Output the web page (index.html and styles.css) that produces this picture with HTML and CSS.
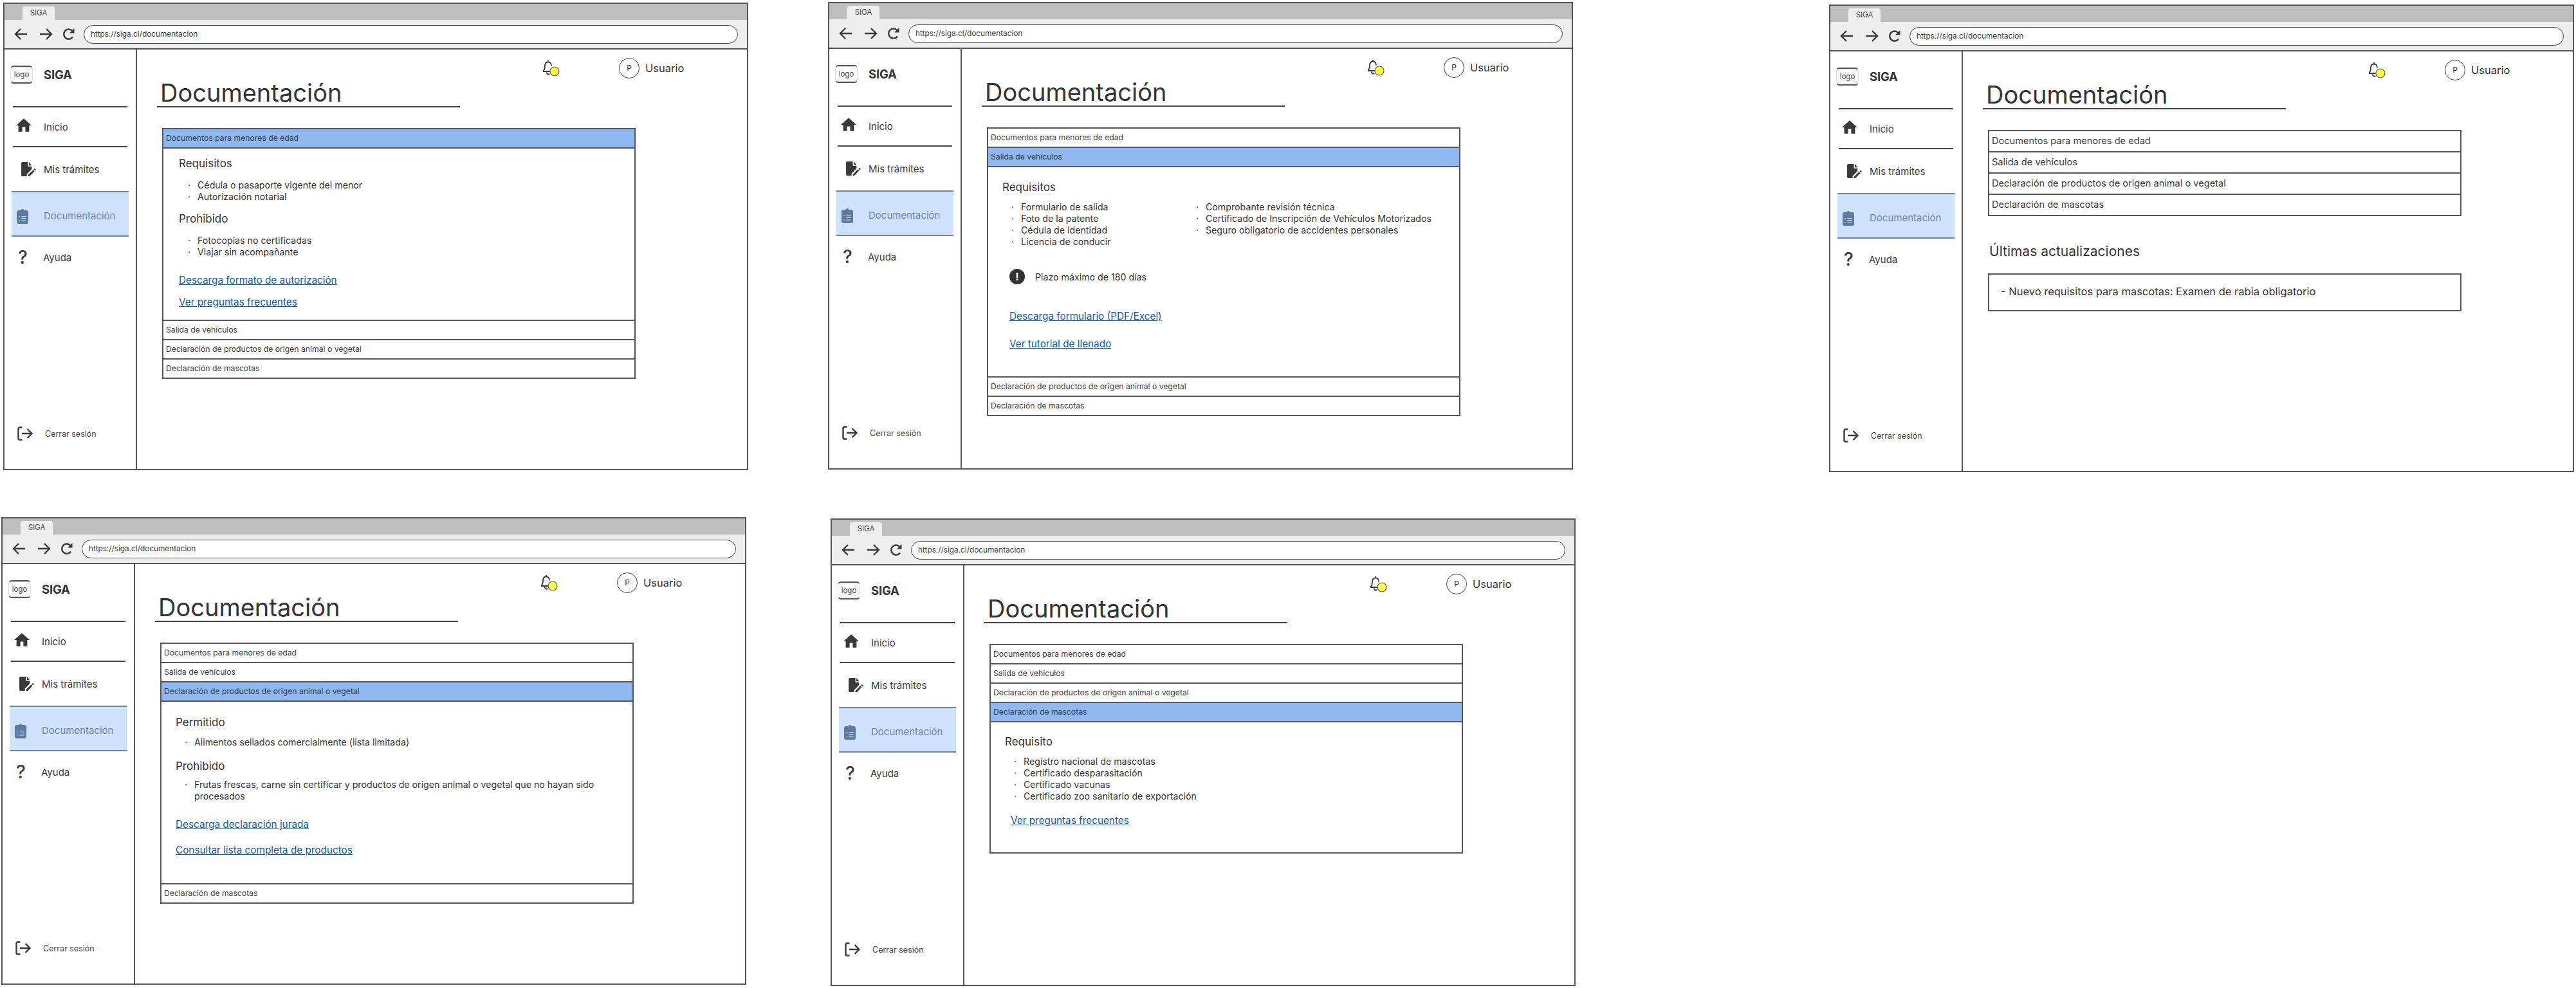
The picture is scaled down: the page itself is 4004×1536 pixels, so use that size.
FILE: index.html
```html
<!DOCTYPE html>
<html lang="es">
<head>
    <meta charset="UTF-8">
    <title>SIGA - Documentación</title>
    <link rel="stylesheet" href="styles.css">
</head>
<body>
    <!-- shared icons -->
    <svg class="icon-defs" aria-hidden="true">
        <symbol id="i-back" viewBox="0 0 22 20"><path d="M20 10H3M10 2l-8 8 8 8" fill="none" stroke="currentColor" stroke-width="2.4"/></symbol>
        <symbol id="i-forward" viewBox="0 0 22 20"><path d="M2 10h17M12 2l8 8-8 8" fill="none" stroke="currentColor" stroke-width="2.4"/></symbol>
        <symbol id="i-reload" viewBox="0 0 20 20"><path d="M16 14.5A7.6 7.6 0 1 1 15.4 5" fill="none" stroke="currentColor" stroke-width="2.4"/><path d="M18.5 1v7.5H11z" fill="currentColor"/></symbol>
        <symbol id="i-home" viewBox="2 3 20 17"><path d="M10 20v-6h4v6h5v-8h3L12 3 2 12h3v8z" fill="currentColor"/></symbol>
        <symbol id="i-doc" viewBox="0 0 25 23"><path d="M2 0h9v6a1 1 0 0 0 1 1h5v4.500l-8 8V23H2a2 2 0 0 1-2-2V2a2 2 0 0 1 2-2zM12.500 0 17 5.500h-4.500z" fill="currentColor"/><path d="M11 21v2h2.500l8-8-2.300-2.300zM20.200 11.800l2.300 2.300 1.500-1.500-2.300-2.300z" fill="currentColor"/></symbol>
        <symbol id="i-clip" viewBox="0 0 18 24"><path d="M3 3h3.500a2.600 2.600 0 0 1 5 0H15a3 3 0 0 1 3 3v15a3 3 0 0 1-3 3H3a3 3 0 0 1-3-3V6a3 3 0 0 1 3-3z" fill="currentColor"/><path d="M7.500 12.500h7M7.500 15.500h7M7.500 19h7M3.500 12.500h1.500M3.500 19h1.500" stroke="#cfe2fb" stroke-width="1.200"/></symbol>
        <symbol id="i-logout" viewBox="0 0 25 22"><path d="M7.500 1.500H3.500A2 2 0 0 0 1.500 3.500v15a2 2 0 0 0 2 2h4" fill="none" stroke="currentColor" stroke-width="2.400"/><path d="M7 11h15M15.500 4l7 7-7 7" fill="none" stroke="currentColor" stroke-width="2.400"/></symbol>
        <symbol id="i-bell" viewBox="0 0 27 26"><path d="M8 1v3M8 3.500c-3.500 0-5 3-5 6.500 0 4-1.200 6-3 8h16M5.500 19.500c.5 2 1.500 3 3 3h2" fill="none" stroke="currentColor" stroke-width="1.800"/><path d="M8 3.500c3.500 0 5 2.500 5 6" fill="none" stroke="currentColor" stroke-width="1.800"/><circle cx="18" cy="18" r="7" fill="#ffff4d" stroke="#555" stroke-width="1.200"/></symbol>
    </svg>

    <!-- 1: Documentos para menores de edad -->
    <section class="window window-1">
        <div class="tabs"><span class="tab">SIGA</span></div>
        <div class="toolbar">
            <svg class="tool-back"><use href="#i-back"/></svg>
            <svg class="tool-forward"><use href="#i-forward"/></svg>
            <svg class="tool-reload"><use href="#i-reload"/></svg>
            <div class="url">https://siga.cl/documentacion</div>
        </div>
        <div class="app">
            <aside class="sidebar">
                <div class="brand">
                    <div class="logo">logo</div>
                    <strong>SIGA</strong>
                </div>
                <a class="nav-item nav-home"><svg class="nav-icon"><use href="#i-home"/></svg>Inicio</a>
                <a class="nav-item nav-tramites"><svg class="nav-icon"><use href="#i-doc"/></svg>Mis trámites</a>
                <a class="nav-item nav-active"><svg class="nav-icon"><use href="#i-clip"/></svg>Documentación</a>
                <a class="nav-item nav-help"><span class="nav-q">?</span>Ayuda</a>
                <a class="nav-logout"><svg class="nav-icon"><use href="#i-logout"/></svg>Cerrar sesión</a>
            </aside>
            <main class="content">
                <div class="topbar">
                    <svg class="bell"><use href="#i-bell"/></svg>
                    <span class="avatar">P</span>
                    <span class="user">Usuario</span>
                </div>
                <h1>Documentación</h1>
                <div class="accordion">
                    <div class="acc-row acc-open">Documentos para menores de edad</div>
                    <div class="panel panel-menores">
                        <h3>Requisitos</h3>
                        <ul>
                            <li>Cédula o pasaporte vigente del menor</li>
                            <li>Autorización notarial</li>
                        </ul>
                        <h3>Prohibido</h3>
                        <ul>
                            <li>Fotocopias no certificadas</li>
                            <li>Viajar sin acompañante</li>
                        </ul>
                        <a class="doc-link">Descarga formato de autorización</a>
                        <a class="doc-link">Ver preguntas frecuentes</a>
                    </div>
                    <div class="acc-row">Salida de vehículos</div>
                    <div class="acc-row">Declaración de productos de origen animal o vegetal</div>
                    <div class="acc-row">Declaración de mascotas</div>
                </div>
            </main>
        </div>
    </section>

    <!-- 2: Salida de vehiculos -->
    <section class="window window-2">
        <div class="tabs"><span class="tab">SIGA</span></div>
        <div class="toolbar">
            <svg class="tool-back"><use href="#i-back"/></svg>
            <svg class="tool-forward"><use href="#i-forward"/></svg>
            <svg class="tool-reload"><use href="#i-reload"/></svg>
            <div class="url">https://siga.cl/documentacion</div>
        </div>
        <div class="app">
            <aside class="sidebar">
                <div class="brand">
                    <div class="logo">logo</div>
                    <strong>SIGA</strong>
                </div>
                <a class="nav-item nav-home"><svg class="nav-icon"><use href="#i-home"/></svg>Inicio</a>
                <a class="nav-item nav-tramites"><svg class="nav-icon"><use href="#i-doc"/></svg>Mis trámites</a>
                <a class="nav-item nav-active"><svg class="nav-icon"><use href="#i-clip"/></svg>Documentación</a>
                <a class="nav-item nav-help"><span class="nav-q">?</span>Ayuda</a>
                <a class="nav-logout"><svg class="nav-icon"><use href="#i-logout"/></svg>Cerrar sesión</a>
            </aside>
            <main class="content">
                <div class="topbar">
                    <svg class="bell"><use href="#i-bell"/></svg>
                    <span class="avatar">P</span>
                    <span class="user">Usuario</span>
                </div>
                <h1>Documentación</h1>
                <div class="accordion">
                    <div class="acc-row">Documentos para menores de edad</div>
                    <div class="acc-row acc-open">Salida de vehículos</div>
                    <div class="panel panel-vehiculos">
                        <h3>Requisitos</h3>
                        <div class="two-cols">
                            <ul>
                                <li>Formulario de salida</li>
                                <li>Foto de la patente</li>
                                <li>Cédula de identidad</li>
                                <li>Licencia de conducir</li>
                            </ul>
                            <ul>
                                <li>Comprobante revisión técnica</li>
                                <li>Certificado de Inscripción de Vehículos Motorizados</li>
                                <li>Seguro obligatorio de accidentes personales</li>
                            </ul>
                        </div>
                        <div class="notice"><span class="notice-icon">!</span>Plazo máximo de 180 días</div>
                        <a class="doc-link">Descarga formulario (PDF/Excel)</a>
                        <a class="doc-link">Ver tutorial de llenado</a>
                    </div>
                    <div class="acc-row">Declaración de productos de origen animal o vegetal</div>
                    <div class="acc-row">Declaración de mascotas</div>
                </div>
            </main>
        </div>
    </section>

    <!-- 3: todo cerrado + actualizaciones -->
    <section class="window window-3">
        <div class="tabs"><span class="tab">SIGA</span></div>
        <div class="toolbar">
            <svg class="tool-back"><use href="#i-back"/></svg>
            <svg class="tool-forward"><use href="#i-forward"/></svg>
            <svg class="tool-reload"><use href="#i-reload"/></svg>
            <div class="url">https://siga.cl/documentacion</div>
        </div>
        <div class="app">
            <aside class="sidebar">
                <div class="brand">
                    <div class="logo">logo</div>
                    <strong>SIGA</strong>
                </div>
                <a class="nav-item nav-home"><svg class="nav-icon"><use href="#i-home"/></svg>Inicio</a>
                <a class="nav-item nav-tramites"><svg class="nav-icon"><use href="#i-doc"/></svg>Mis trámites</a>
                <a class="nav-item nav-active"><svg class="nav-icon"><use href="#i-clip"/></svg>Documentación</a>
                <a class="nav-item nav-help"><span class="nav-q">?</span>Ayuda</a>
                <a class="nav-logout"><svg class="nav-icon"><use href="#i-logout"/></svg>Cerrar sesión</a>
            </aside>
            <main class="content">
                <div class="topbar">
                    <svg class="bell"><use href="#i-bell"/></svg>
                    <span class="avatar">P</span>
                    <span class="user">Usuario</span>
                </div>
                <h1>Documentación</h1>
                <div class="accordion accordion-large">
                    <div class="acc-row">Documentos para menores de edad</div>
                    <div class="acc-row">Salida de vehículos</div>
                    <div class="acc-row">Declaración de productos de origen animal o vegetal</div>
                    <div class="acc-row">Declaración de mascotas</div>
                </div>
                <h2>Últimas actualizaciones</h2>
                <div class="updates">- Nuevo requisitos para mascotas: Examen de rabia obligatorio</div>
            </main>
        </div>
    </section>

    <!-- 4: Declaracion de productos -->
    <section class="window window-4">
        <div class="tabs"><span class="tab">SIGA</span></div>
        <div class="toolbar">
            <svg class="tool-back"><use href="#i-back"/></svg>
            <svg class="tool-forward"><use href="#i-forward"/></svg>
            <svg class="tool-reload"><use href="#i-reload"/></svg>
            <div class="url">https://siga.cl/documentacion</div>
        </div>
        <div class="app">
            <aside class="sidebar">
                <div class="brand">
                    <div class="logo">logo</div>
                    <strong>SIGA</strong>
                </div>
                <a class="nav-item nav-home"><svg class="nav-icon"><use href="#i-home"/></svg>Inicio</a>
                <a class="nav-item nav-tramites"><svg class="nav-icon"><use href="#i-doc"/></svg>Mis trámites</a>
                <a class="nav-item nav-active"><svg class="nav-icon"><use href="#i-clip"/></svg>Documentación</a>
                <a class="nav-item nav-help"><span class="nav-q">?</span>Ayuda</a>
                <a class="nav-logout"><svg class="nav-icon"><use href="#i-logout"/></svg>Cerrar sesión</a>
            </aside>
            <main class="content">
                <div class="topbar">
                    <svg class="bell"><use href="#i-bell"/></svg>
                    <span class="avatar">P</span>
                    <span class="user">Usuario</span>
                </div>
                <h1>Documentación</h1>
                <div class="accordion">
                    <div class="acc-row">Documentos para menores de edad</div>
                    <div class="acc-row">Salida de vehículos</div>
                    <div class="acc-row acc-open">Declaración de productos de origen animal o vegetal</div>
                    <div class="panel panel-productos">
                        <h3>Permitido</h3>
                        <ul>
                            <li>Alimentos sellados comercialmente (lista limitada)</li>
                        </ul>
                        <h3>Prohibido</h3>
                        <ul>
                            <li>Frutas frescas, carne sin certificar y productos de origen animal o vegetal que no hayan sido procesados</li>
                        </ul>
                        <a class="doc-link">Descarga declaración jurada</a>
                        <a class="doc-link">Consultar lista completa de productos</a>
                    </div>
                    <div class="acc-row">Declaración de mascotas</div>
                </div>
            </main>
        </div>
    </section>

    <!-- 5: Declaracion de mascotas -->
    <section class="window window-5">
        <div class="tabs"><span class="tab">SIGA</span></div>
        <div class="toolbar">
            <svg class="tool-back"><use href="#i-back"/></svg>
            <svg class="tool-forward"><use href="#i-forward"/></svg>
            <svg class="tool-reload"><use href="#i-reload"/></svg>
            <div class="url">https://siga.cl/documentacion</div>
        </div>
        <div class="app">
            <aside class="sidebar">
                <div class="brand">
                    <div class="logo">logo</div>
                    <strong>SIGA</strong>
                </div>
                <a class="nav-item nav-home"><svg class="nav-icon"><use href="#i-home"/></svg>Inicio</a>
                <a class="nav-item nav-tramites"><svg class="nav-icon"><use href="#i-doc"/></svg>Mis trámites</a>
                <a class="nav-item nav-active"><svg class="nav-icon"><use href="#i-clip"/></svg>Documentación</a>
                <a class="nav-item nav-help"><span class="nav-q">?</span>Ayuda</a>
                <a class="nav-logout"><svg class="nav-icon"><use href="#i-logout"/></svg>Cerrar sesión</a>
            </aside>
            <main class="content">
                <div class="topbar">
                    <svg class="bell"><use href="#i-bell"/></svg>
                    <span class="avatar">P</span>
                    <span class="user">Usuario</span>
                </div>
                <h1>Documentación</h1>
                <div class="accordion">
                    <div class="acc-row">Documentos para menores de edad</div>
                    <div class="acc-row">Salida de vehículos</div>
                    <div class="acc-row">Declaración de productos de origen animal o vegetal</div>
                    <div class="acc-row acc-open">Declaración de mascotas</div>
                    <div class="panel panel-mascotas">
                        <h3>Requisito</h3>
                        <ul>
                            <li>Registro nacional de mascotas</li>
                            <li>Certificado desparasitación</li>
                            <li>Certificado vacunas</li>
                            <li>Certificado zoo sanitario de exportación</li>
                        </ul>
                        <a class="doc-link">Ver preguntas frecuentes</a>
                    </div>
                </div>
            </main>
        </div>
    </section>
</body>
</html>
```

FILE: styles.css
```css
body {
    margin: 0;
    position: relative;
    width: 4004px;
    height: 1536px;
    background: #fff;
    color: #333;
    font-family: "Inter", "Liberation Sans", sans-serif;
    overflow: hidden;
}

.icon-defs {
    position: absolute;
    width: 0;
    height: 0;
}

/* the five wireframes sit freely on the canvas */
.window {
    position: absolute;
    box-sizing: border-box;
    width: 1158px;
    height: 727px;
    border: 2px solid #555;
    display: flex;
    flex-direction: column;
    background: #fff;
}

.window-1 { left: 5px; top: 4px; }
.window-2 { left: 1287px; top: 3px; }
.window-3 { left: 2843px; top: 7px; }
.window-4 { left: 2px; top: 804px; }
.window-5 { left: 1291px; top: 806px; }

/* browser chrome */
.tabs {
    height: 25px;
    padding-left: 28px;
    background: #bfbfbf;
    display: flex;
    align-items: flex-end;
}

.tab {
    width: 50px;
    height: 21px;
    line-height: 21px;
    text-align: center;
    font-size: 11.5px;
    color: #444;
    background: #eee;
    border-radius: 4px 4px 0 0;
}

.toolbar {
    height: 46px;
    box-sizing: border-box;
    background: #eee;
    border-bottom: 2px solid #555;
    display: flex;
    align-items: center;
    padding-left: 15px;
    color: #3a3a3a;
}

.tool-back { width: 22px; height: 20px; }
.tool-forward { width: 22px; height: 20px; margin-left: 16px; }
.tool-reload { width: 20px; height: 20px; margin-left: 15px; }

.url {
    box-sizing: border-box;
    width: 1017px;
    height: 29px;
    line-height: 26px;
    margin-left: 13px;
    padding-left: 10px;
    font-size: 11.8px;
    background: #fff;
    border: 1.5px solid #444;
    border-radius: 15px;
}

.app {
    flex: 1;
    display: flex;
    min-height: 0;
}

/* sidebar */
.sidebar {
    box-sizing: border-box;
    width: 206px;
    border-right: 2px solid #555;
    padding: 0 11px;
    display: flex;
    flex-direction: column;
}

.brand {
    height: 88px;
    display: flex;
    align-items: center;
    gap: 17px;
    padding: 0 0 10px 0;
    box-sizing: border-box;
}

.brand strong {
    font-size: 18.5px;
    font-weight: 700;
    letter-spacing: -.2px;
}

.logo {
    width: 35px;
    height: 24px;
    margin-left: -2px;
    line-height: 22px;
    box-sizing: border-box;
    border: 1px solid #ddd;
    border-radius: 5px;
    text-align: center;
    font-size: 11.5px;
    color: #444;
    background:
        linear-gradient(to top right, transparent 49%, #ccc 50%, transparent 51%),
        linear-gradient(to bottom right, transparent 49%, #ccc 50%, transparent 51%);
    box-shadow: 0 -3px 0 -1px #555, 0 3px 0 -1px #555;
}

.nav-item {
    display: flex;
    align-items: center;
    font-size: 15px;
    color: #3a3a3a;
    margin: 0 2px;
    padding-left: 48px;
    position: relative;
}

.nav-icon {
    position: absolute;
    color: #3a3a3a;
}

.nav-home {
    height: 60px;
    border-top: 2px solid #444;
    border-bottom: 2px solid #444;
}

.nav-home .nav-icon { left: 5px; top: 17px; width: 24px; height: 21px; }

.nav-tramites { height: 68px; }
.nav-tramites .nav-icon { left: 13px; top: 23px; width: 24px; height: 22px; }

.nav-active {
    height: 71px;
    margin: 0;
    padding: 5px 0 0 50px;
    box-sizing: border-box;
    background: #cfe2fb;
    color: #6d84a6;
    border-top: 2px solid #6f839f;
    border-bottom: 2px solid #6f839f;
}

.nav-active .nav-icon { left: 8px; top: 25px; width: 18px; height: 24px; color: #5f7a9f; }

.nav-help {
    height: 64px;
    padding-left: 47px;
}

.nav-q {
    position: absolute;
    left: 8px;
    top: 17px;
    font-size: 28px;
    line-height: 30px;
    font-weight: 500;
    color: #3a3a3a;
}

.nav-logout {
    margin-top: auto;
    margin-bottom: 42px;
    padding-left: 52px;
    height: 24px;
    line-height: 24px;
    font-size: 12.5px;
    color: #444;
    position: relative;
}

.nav-logout .nav-icon { left: 9px; top: 0; width: 25px; height: 22px; }

/* main area */
.content {
    flex: 1;
    min-width: 0;
}

.topbar {
    box-sizing: border-box;
    height: 46px;
    display: flex;
    align-items: center;
    padding: 12px 0 0 631px;
}

.bell {
    width: 27px;
    height: 26px;
    color: #3a3a3a;
}

.avatar {
    box-sizing: border-box;
    width: 32px;
    height: 32px;
    margin-left: 91px;
    border: 1.5px solid #444;
    border-radius: 50%;
    text-align: center;
    line-height: 29px;
    font-size: 12px;
}

.user {
    margin-left: 9px;
    font-size: 16.5px;
}

h1 {
    box-sizing: border-box;
    width: 471px;
    height: 44px;
    margin: 0 0 0 31px;
    padding-left: 5px;
    border-bottom: 2px solid #444;
    font-size: 38px;
    line-height: 42px;
    font-weight: 400;
    color: #333;
    white-space: nowrap;
}

/* accordion */
.accordion {
    box-sizing: border-box;
    width: 736px;
    margin: 32px 0 0 39px;
    border: 2px solid #555;
    border-top: 0;
    border-bottom: 0;
}

.acc-row {
    box-sizing: border-box;
    height: 30px;
    line-height: 28px;
    padding-left: 4px;
    font-size: 12.2px;
    color: #3a3a3a;
    border-top: 2px solid #555;
}

.acc-row:last-child {
    height: 32px;
    border-bottom: 2px solid #555;
}

.acc-open {
    background: #8fb8f0;
    color: #2f3a4a;
}

.panel {
    box-sizing: border-box;
    border-top: 2px solid #555;
    padding: 0 20px 0 24px;
}

.panel:last-child {
    border-bottom: 2px solid #555;
}

.panel h3 {
    font-size: 17px;
    line-height: 22px;
    font-weight: 400;
    margin: 0;
}

.panel ul {
    list-style: none;
    margin: 0;
    padding: 0 0 0 14px;
    font-size: 14.2px;
    line-height: 18px;
}

.panel li {
    display: flex;
}

.panel li::before {
    content: "·";
    flex: 0 0 15px;
}

.doc-link {
    display: table;
    font-size: 15.3px;
    line-height: 20px;
    color: #0d5aa7;
    text-decoration: underline;
}

.panel-menores { height: 268px; padding-top: 12px; }
.panel-menores ul { margin: 14px 0; }
.panel-menores .doc-link { margin-bottom: 14px; }
.panel-menores ul:last-of-type { margin-bottom: 25px; }

.panel-vehiculos { height: 327px; padding: 20px 20px 0 22px; }
.panel-vehiculos .two-cols { display: flex; margin-top: 11px; }
.panel-vehiculos ul { width: 273px; }
.panel-vehiculos ul + ul { width: auto; }
.panel-vehiculos .doc-link { margin: 0 0 23px 11px; }

.notice {
    display: flex;
    align-items: center;
    gap: 16px;
    margin: 33px 0 40px 11px;
    font-size: 14.2px;
}

.notice-icon {
    width: 24px;
    height: 24px;
    line-height: 24px;
    border-radius: 50%;
    background: #333;
    color: #fff;
    text-align: center;
    font-size: 16px;
    font-weight: 700;
}

.panel-productos { height: 284px; padding: 21px 20px 0 22px; }
.panel-productos ul { margin: 11px 0 17px; max-width: 650px; }
.panel-productos ul:last-of-type { margin-top: 9px; margin-bottom: 25px; }
.panel-productos .doc-link { margin-bottom: 20px; }

.panel-mascotas { height: 206px; padding: 19px 20px 0 22px; }
.panel-mascotas ul { margin: 11px 0 19px; }
.panel-mascotas .doc-link { margin-left: 9px; }

/* third frame: bigger rows and the updates box */
.accordion-large .acc-row {
    height: 33px;
    line-height: 31px;
    font-size: 14.6px;
}

.accordion-large .acc-row:last-child {
    height: 35px;
}

h2 {
    margin: 40px 0 0 41px;
    font-size: 21px;
    line-height: 30px;
    font-weight: 400;
}

.updates {
    box-sizing: border-box;
    width: 736px;
    height: 59px;
    margin: 19px 0 0 39px;
    padding-left: 18px;
    line-height: 52px;
    font-size: 16.5px;
    border: 2px solid #555;
}
```
